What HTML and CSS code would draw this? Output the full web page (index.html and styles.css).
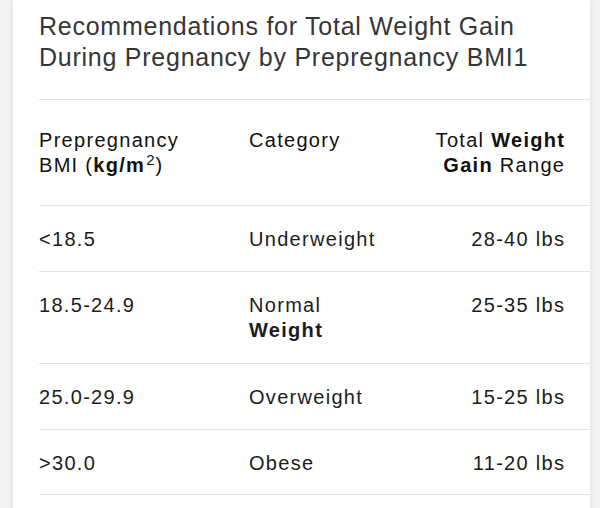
FILE: index.html
```html
<!DOCTYPE html>
<html lang="en">
<head>
<meta charset="utf-8">
<title>Weight Gain Recommendations</title>
<link rel="stylesheet" href="styles.css">
</head>
<body>
<div class="card">
  <h2 class="title">Recommendations for Total Weight Gain During Pregnancy by Prepregnancy BMI1</h2>
  <div class="table">
    <div class="row head">
      <div class="c1">Prepregnancy BMI (<b>kg/m</b><sup>2</sup>)</div>
      <div class="c2">Category</div>
      <div class="c3">Total <b>Weight Gain</b> Range</div>
    </div>
    <div class="row">
      <div class="c1">&lt;18.5</div>
      <div class="c2">Underweight</div>
      <div class="c3">28-40 lbs</div>
    </div>
    <div class="row tall">
      <div class="c1">18.5-24.9</div>
      <div class="c2">Normal <b>Weight</b></div>
      <div class="c3">25-35 lbs</div>
    </div>
    <div class="row">
      <div class="c1">25.0-29.9</div>
      <div class="c2">Overweight</div>
      <div class="c3">15-25 lbs</div>
    </div>
    <div class="row last">
      <div class="c1">&gt;30.0</div>
      <div class="c2">Obese</div>
      <div class="c3">11-20 lbs</div>
    </div>
  </div>
</div>
</body>
</html>
```
FILE: styles.css
```css
html, body {
  margin: 0;
  padding: 0;
}
body {
  background: #f4f4f4;
  font-family: "Liberation Sans", Arial, sans-serif;
  height: 508px;
  overflow: hidden;
}
.card {
  margin-left: 13px;
  width: 577px;
  min-height: 520px;
  background: #fff;
  box-shadow: 0 0 6px rgba(0, 0, 0, 0.09);
  padding-left: 26px;
  box-sizing: border-box;
}
.title {
  margin: 0;
  padding: 11px 40px 26px 0;
  font-size: 25px;
  line-height: 31px;
  font-weight: normal;
  letter-spacing: 0.75px;
  color: #363636;
  border-bottom: 1px solid #e3e3e3;
}
.row {
  display: grid;
  grid-template-columns: 190px 140px 1fr;
  column-gap: 20px;
  padding: 21px 26px 19px 0;
  border-bottom: 1px solid #e3e3e3;
  font-size: 20px;
  line-height: 25px;
  letter-spacing: 1.3px;
  color: #1c1c1c;
}
.row.head {
  padding-top: 28px;
  padding-bottom: 27px;
  color: #111;
}
.row.tall {
  padding-bottom: 20px;
}
.row.last {
  padding-bottom: 18px;
}
.c1 {
  padding-right: 20px;
}
.c3 {
  text-align: right;
  margin-right: -1.3px;
}
b {
  font-weight: bold;
}
sup {
  font-size: 15px;
  line-height: 0;
  vertical-align: 7px;
  letter-spacing: 0;
  margin-left: 1px;
  margin-right: 1px;
}
```
